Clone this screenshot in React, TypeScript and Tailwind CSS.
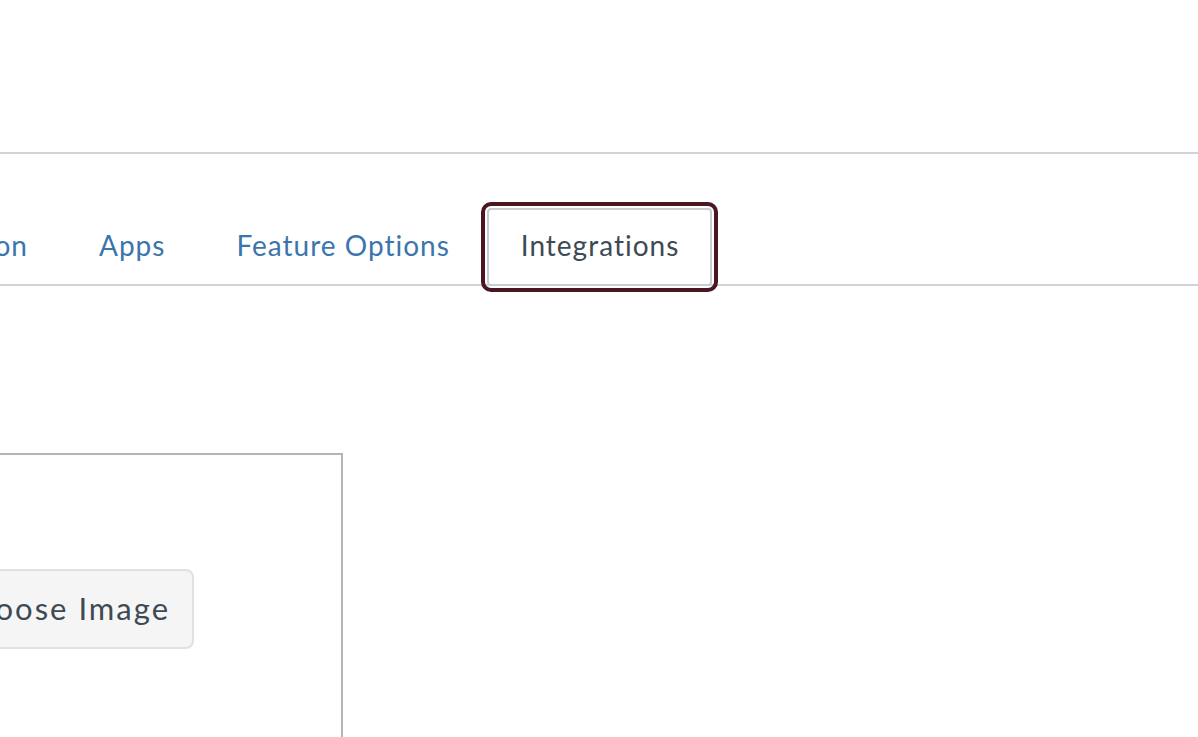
import React from "react";

export default function App() {
  const font = { fontFamily: "Lato, 'Noto Sans', sans-serif" };
  return (
    <div className="w-[1198px] h-[737px] overflow-hidden bg-white relative" style={font}>
      <div className="h-[152px]" />
      <div className="h-[2px] bg-[#d0d3d6]" />
      <div className="mt-[54px] flex items-end border-b-2 border-[#d0d3d6] h-[78px]">
        <div className="w-[61px] flex justify-end shrink-0">
          <div className="shrink-0 h-[78px] pl-[34px] pr-[33px] pb-[4px] flex items-center -mb-[2px] text-[28px] tracking-[1px] text-[#3b75ad] whitespace-nowrap">
            Navigation
          </div>
        </div>
        <div className="ml-1 h-[78px] pl-[34px] pr-[33px] pb-[4px] flex items-center -mb-[2px] text-[28px] tracking-[1px] text-[#3b75ad] whitespace-nowrap">
          Apps
        </div>
        <div className="ml-1 h-[78px] pl-[34px] pr-[33px] pb-[4px] flex items-center -mb-[2px] text-[28px] tracking-[1px] text-[#3b75ad] whitespace-nowrap">
          Feature Options
        </div>
        <div className="ml-1 h-[78px] pl-[32px] pr-[31px] pb-[4px] flex items-center -mb-[2px] text-[28px] tracking-[1px] text-[#3d4a54] whitespace-nowrap bg-white border-2 border-[#c7cdd1] outline-4 outline-solid outline-[#4a1622] outline-offset-2 rounded-[4px]">
          Integrations
        </div>
      </div>
      <div className="mt-[167px] -ml-[40px] w-[383px] h-[400px] border-2 border-[#b5b5b5] pt-[114px]">
        <div className="flex justify-end w-[232px]">
          <button className="shrink-0 h-[80px] pl-[28px] pr-[22px] pb-[2px] bg-[#f5f5f5] border-2 border-[#dfe1e3] rounded-[8px] text-[31px] tracking-[2px] text-[#3d4a54] whitespace-nowrap" style={font}>
            Choose Image
          </button>
        </div>
      </div>
    </div>
  );
}
